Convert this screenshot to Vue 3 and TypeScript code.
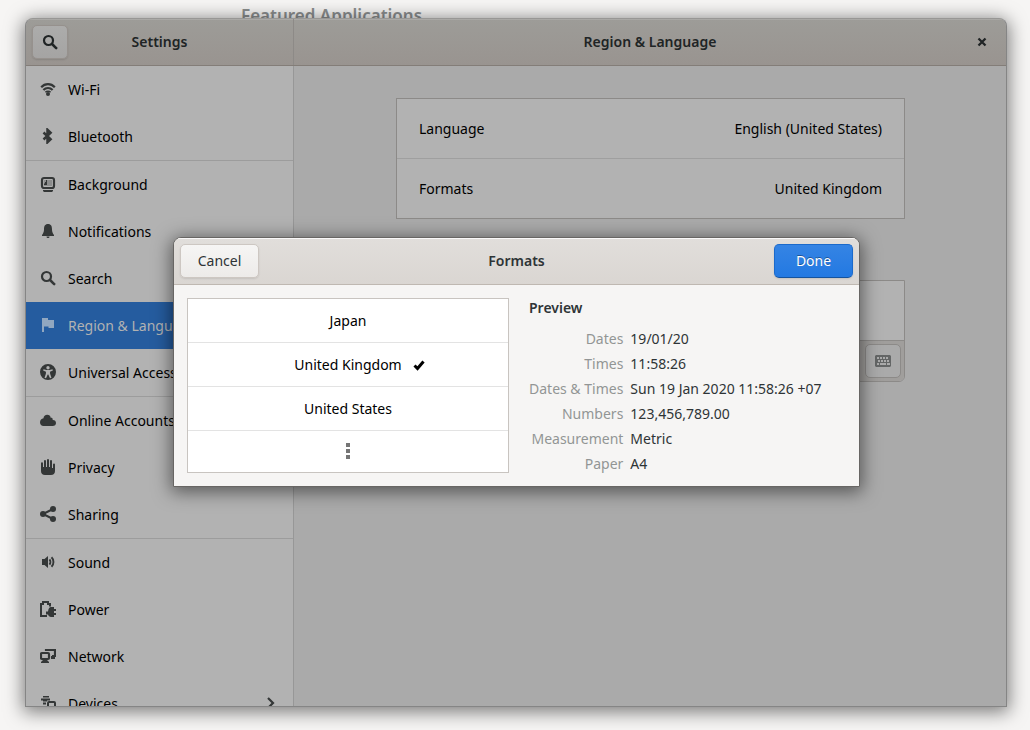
<script setup lang="ts">
import { ref } from 'vue'

interface Panel {
  id: string
  label: string
  submenu?: boolean
}

const groups: Panel[][] = [
  [
    { id: 'wifi', label: 'Wi-Fi' },
    { id: 'bluetooth', label: 'Bluetooth' },
  ],
  [
    { id: 'background', label: 'Background' },
    { id: 'notifications', label: 'Notifications' },
    { id: 'search', label: 'Search' },
    { id: 'region', label: 'Region & Language' },
    { id: 'access', label: 'Universal Access' },
  ],
  [
    { id: 'accounts', label: 'Online Accounts' },
    { id: 'privacy', label: 'Privacy' },
    { id: 'sharing', label: 'Sharing' },
  ],
  [
    { id: 'sound', label: 'Sound' },
    { id: 'power', label: 'Power' },
    { id: 'network', label: 'Network' },
    { id: 'devices', label: 'Devices', submenu: true },
  ],
]

const icons: Record<string, string> = {
  wifi: '<g fill="none" stroke="currentColor" stroke-width="2.200"><path d="M1.200 6.200C5 2.200 11 2.200 14.800 6.200"/><path d="M3.400 9c2.600-2.700 6.600-2.700 9.200 0"/></g><path d="M5.400 11.300c1.400-1.500 3.800-1.500 5.200 0" fill="none" stroke="currentColor" stroke-width="1.500"/><circle cx="8" cy="13" r="2"/>',
  bluetooth:
    '<path d="M3.500 4.500 10.600 11.200 7.500 14.200V1.800L10.600 4.800 3.500 11.500" fill="none" stroke="currentColor" stroke-width="2.500"/>',
  background:
    '<rect x="2" y="2" width="12" height="10" rx="2" fill="none" stroke="currentColor" stroke-width="2.200"/><path d="M4 4h8v6H4z" opacity=".3"/><path d="M4 9V7.500h1V6h1V4h1v5z"/><path d="M3 14h10v1l-1 1H4l-1-1z"/>',
  notifications:
    '<path d="M8 1c-3.200 0-4 2.500-4 5.200 0 2.500-.600 3.800-2 5.800v1h12v-1c-1.400-2-2-3.300-2-5.800C12 3.500 11.200 1 8 1z"/><path d="M6.500 13.500h3c0 1-.700 1.500-1.500 1.500s-1.500-.500-1.500-1.500z"/>',
  search:
    '<circle cx="6.500" cy="6.500" r="4.500" fill="none" stroke="currentColor" stroke-width="2.200"/><path d="m10 10 4.200 4.200" stroke="currentColor" stroke-width="2.500" stroke-linecap="round"/>',
  region: '<path d="M2 1h6v2h6v8H8.500V9.500H4V15H2z"/>',
  access:
    '<path fill-rule="evenodd" d="M8 0a8 8 0 1 0 0 16A8 8 0 0 0 8 0zm0 2.100a1.700 1.700 0 1 1 0 3.400 1.700 1.700 0 0 1 0-3.400zM3.500 5.300 6.500 6h3l3-.700.400 1.300-2.900 1.100.100 2 1.400 4-1.500.500L8.300 10.500h-.600L6 14.200l-1.500-.500 1.400-4 .100-2-2.900-1.100z"/>',
  accounts:
    '<path d="M7.200 2.800c-2 0-3.600 1.500-3.700 3.500C1.500 6.600 0 8.100 0 10.200 0 12.300 1.400 14 3.500 14h9.200c1.900 0 3.300-1.300 3.300-3 0-1.800-1.500-3.100-3.400-2.900.300-.700.200-1.300-.300-1.800-.400-.400-.900-.500-1.500-.400C10.500 4 9.200 2.800 7.200 2.800z"/>',
  privacy:
    '<path d="M1 4.200a.9.900 0 0 1 2 0V8h1V2a1 1 0 0 1 2 0v6h1V1a1 1 0 0 1 2 0v7h1V2a1 1 0 0 1 2 0v7h1V5.500a1 1 0 0 1 2 0V12c0 2.500-1.500 4-4 4H5c-2.500 0-4-1.500-4-4z"/>',
  sharing:
    '<path d="M13 3 3 8l10 5" fill="none" stroke="currentColor" stroke-width="2"/><circle cx="13" cy="3" r="3"/><circle cx="3" cy="8" r="3"/><circle cx="13" cy="13" r="3"/>',
  sound:
    '<path d="M2 5h2.500L8 2v12l-3.500-3H2z"/><path d="M9.500 5.300c1.200 1.400 1.200 4 0 5.400M11.500 3.200c2.600 2.400 2.600 7.200 0 9.600" fill="none" stroke="currentColor" stroke-width="1.900"/>',
  power:
    '<path d="M7 15H1V3h2V1h5v2h2v2.500" fill="none" stroke="currentColor" stroke-width="2"/><path d="M11 6h3v2h2v2h-2v2h2v2h-2v2h-3c-1.500 0-2.500-1-3-2.500H6v-3h2C8.500 7 9.500 6 11 6z"/>',
  network:
    '<rect x="1" y="5" width="8" height="6" rx="1" fill="none" stroke="currentColor" stroke-width="2.200"/><path d="M3 12h4l2 2v1H1v-1z"/><path d="M6 3V2h9v6h-3" fill="none" stroke="currentColor" stroke-width="2.200"/><path d="M11 8h4v3H11z"/>',
  devices:
    '<path d="M3 1h6v1.500H3zM1 3.500h9V5.500H7V6.500H3V5.500H1zM3 7.500h3v2H3z"/><rect x="8" y="7" width="7" height="8" rx="1" fill="none" stroke="currentColor" stroke-width="2"/><path d="M3 11h3v4H3z"/>',
}

const activePanel = ref('region')
const language = 'English (United States)'
const regions = ['Japan', 'United Kingdom', 'United States']
const selected = ref('United Kingdom')

const preview: [string, string][] = [
  ['Dates', '19/01/20'],
  ['Times', '11:58:26'],
  ['Dates & Times', 'Sun 19 Jan 2020 11:58:26 +07'],
  ['Numbers', '123,456,789.00'],
  ['Measurement', 'Metric'],
  ['Paper', 'A4'],
]
</script>

<template>
  <div class="desktop">
    <h2 class="featured">Featured Applications</h2>

    <main class="window">
      <header class="titlebar">
        <div class="bar bar-side">
          <button class="search-btn" type="button" aria-label="Search settings">
            <svg class="icon" viewBox="0 0 16 16" v-html="icons.search" />
          </button>
          <h1>Settings</h1>
        </div>
        <div class="bar bar-main">
          <h1>Region &amp; Language</h1>
          <button class="close-btn" type="button" aria-label="Close">
            <svg class="icon" viewBox="0 0 16 16">
              <path d="m4.500 4.500 7 7m0-7-7 7" stroke="currentColor" stroke-width="2.300" />
            </svg>
          </button>
        </div>
      </header>

      <div class="body">
        <nav class="sidebar">
          <div v-for="(group, g) in groups" :key="g" class="group">
            <button
              v-for="item in group"
              :key="item.id"
              type="button"
              class="nav-item"
              :class="{ active: item.id === activePanel }"
              @click="activePanel = item.id"
            >
              <svg class="icon" viewBox="0 0 16 16" v-html="icons[item.id]" />
              <span>{{ item.label }}</span>
              <svg v-if="item.submenu" class="icon chevron" viewBox="0 0 16 16">
                <path d="m5 3 5 5-5 5" fill="none" stroke="currentColor" stroke-width="2.200" />
              </svg>
            </button>
          </div>
        </nav>

        <section class="content">
          <div class="card">
            <button type="button" class="setting">
              <span>Language</span><span>{{ language }}</span>
            </button>
            <button type="button" class="setting">
              <span>Formats</span><span>{{ selected }}</span>
            </button>
          </div>
          <div class="card sources">
            <div class="source-row"></div>
            <div class="source-tools">
              <button type="button" class="key-btn" aria-label="Show keyboard layout">
                <svg class="icon" viewBox="0 0 16 16">
                  <path
                    fill-rule="evenodd"
                    d="M1 2h14l1 1v10l-1 1H1l-1-1V3zM2 4v2h2V4zm3 0v2h2V4zm3 0v2h2V4zm3 0v2h2V4zM3 7v2h2V7zm3 0v2h2V7zm3 0v2h2V7zm3 0v2h2V7zM2 10v2h2v-2zm3 0v2h6v-2zm7 0v2h3v-2z"
                  />
                </svg>
              </button>
            </div>
          </div>
        </section>
      </div>

      <div class="overlay">
        <div class="dialog" role="dialog" aria-labelledby="formats-title">
          <header class="dialog-bar">
            <button type="button" class="btn">Cancel</button>
            <h1 id="formats-title">Formats</h1>
            <button type="button" class="btn primary">Done</button>
          </header>
          <div class="dialog-body">
            <div class="regions">
              <button
                v-for="r in regions"
                :key="r"
                type="button"
                class="region"
                :aria-pressed="r === selected"
                @click="selected = r"
              >
                <span></span>
                <span>{{ r }}</span>
                <svg v-if="r === selected" class="icon" viewBox="0 0 16 16">
                  <path d="m3.500 8.500 3 3 6-7" fill="none" stroke="currentColor" stroke-width="3" />
                </svg>
              </button>
              <button type="button" class="region more" aria-label="More formats">
                <svg class="icon" viewBox="0 0 16 16">
                  <path d="M6 0h4v4H6zM6 6h4v4H6zM6 12h4v4H6z" />
                </svg>
              </button>
            </div>
            <section class="preview">
              <h2>Preview</h2>
              <dl>
                <template v-for="[name, value] in preview" :key="name">
                  <dt>{{ name }}</dt>
                  <dd>{{ value }}</dd>
                </template>
              </dl>
            </section>
          </div>
        </div>
      </div>
    </main>
  </div>
</template>

<style>
body {
  background: #f6f5f4;
}
</style>

<style scoped>
.desktop,
.desktop * {
  box-sizing: border-box;
}
.desktop {
  position: relative;
  height: 100vh;
  padding: 18px 23px 23px 25px;
  font: 14px/20px "Noto Sans", "Open Sans", sans-serif;
  color: #000;
}
h1,
h2,
dl,
dd {
  margin: 0;
}
h1,
.preview h2 {
  font-size: 14px;
  line-height: 20px;
  font-weight: 600;
}
button {
  font: inherit;
  color: inherit;
  background: none;
  border: 0;
  padding: 0;
}
.icon {
  width: 16px;
  height: 16px;
  flex: none;
  display: block;
  fill: currentColor;
}
.featured {
  position: absolute;
  top: 4px;
  left: 241px;
  font-size: 17px;
  line-height: 24px;
  font-weight: 600;
  color: #8b8e8f;
}
.window {
  position: relative;
  height: 100%;
  display: flex;
  flex-direction: column;
  overflow: hidden;
  border: 1px solid #858585;
  border-top-color: #989795;
  border-radius: 8px 8px 0 0;
  background: #aaa;
  box-shadow: 0 3px 18px 2px rgba(0, 0, 0, 0.5);
}
.titlebar {
  flex: none;
  display: flex;
  height: 47px;
  color: #202425;
  background: linear-gradient(#9d9c98, #999490);
  border-bottom: 1px solid #837d78;
  box-shadow: inset 0 1px #aaa9a6;
}
.bar {
  display: grid;
  grid-template-columns: 36px 1fr 36px;
  align-items: center;
  padding: 0 6px;
  text-align: center;
}
.bar h1 {
  grid-column: 2;
}
.bar-side {
  width: 268px;
  border-right: 1px solid #8d8a87;
}
.bar-main {
  flex: 1;
}
.search-btn {
  display: grid;
  place-items: center;
  height: 34px;
  border: 1px solid #96918d;
  border-radius: 5px;
  background: linear-gradient(#acacab, #a5a4a3);
  box-shadow: 0 1px 2px rgba(0, 0, 0, 0.12);
}
.close-btn {
  display: grid;
  place-items: center;
  height: 34px;
}
.body {
  flex: 1;
  min-height: 0;
  display: flex;
}
.sidebar {
  width: 268px;
  flex: none;
  overflow: hidden;
  background: #b2b2b2;
  border-right: 1px solid #979797;
}
.group + .group {
  border-top: 1px solid #9c9c9c;
}
.nav-item {
  display: flex;
  align-items: center;
  gap: 12px;
  width: 100%;
  height: 47px;
  padding: 0 14px;
  white-space: nowrap;
}
.nav-item .icon {
  margin-bottom: 1px;
  color: #343737;
}
.nav-item.active {
  background: #255c9f;
  color: #b2b2b2;
}
.nav-item.active .icon {
  color: #91a7c0;
}
.nav-item .chevron {
  margin-left: auto;
}
.content {
  flex: 1;
  padding: 32px 101px 0 102px;
}
.card {
  background: #b2b2b2;
  border: 1px solid #8c8a88;
}
.setting {
  display: flex;
  justify-content: space-between;
  align-items: center;
  width: 100%;
  height: 59px;
  padding: 0 22px;
}
.setting + .setting {
  height: 60px;
  border-top: 1px solid #9f9f9f;
}
.sources {
  margin-top: 61px;
  border-radius: 0 0 6px 6px;
}
.source-row {
  height: 59px;
}
.source-tools {
  display: flex;
  justify-content: flex-end;
  padding: 3px;
  border-top: 1px solid #8c8a88;
  border-radius: 0 0 5px 5px;
  background: #a09e9c;
}
.key-btn {
  display: grid;
  place-items: center;
  width: 36px;
  height: 34px;
  border: 1px solid #8c8a88;
  border-radius: 5px;
  background: #aaa;
  color: #646666;
}
.overlay {
  position: absolute;
  inset: 0;
  display: grid;
  place-items: center;
  padding: 0 0 1px 1px;
}
.dialog {
  width: 687px;
  max-width: 100%;
  overflow: hidden;
  border: 1px solid #686664;
  border-radius: 8px 8px 0 0;
  background: #f6f5f4;
  color: #2e3436;
  box-shadow: 0 3px 18px 2px rgba(0, 0, 0, 0.5);
}
.dialog-bar {
  display: grid;
  grid-template-columns: 1fr auto 1fr;
  align-items: center;
  height: 47px;
  padding: 0 6px;
  background: linear-gradient(#e1dedb, #dad6d2);
  border-bottom: 1px solid #bfb8b1;
  box-shadow: inset 0 1px #f9f8f8;
}
.btn {
  width: 79px;
  height: 34px;
  border: 1px solid #cdc7c2;
  border-radius: 5px;
  background: linear-gradient(#f6f5f4, #edebe9);
  box-shadow: 0 1px 2px rgba(0, 0, 0, 0.1);
}
.btn.primary {
  justify-self: end;
  border-color: #1b6acb;
  border-bottom-color: #15539e;
  background: linear-gradient(#3584e4, #2379e2);
  color: #fff;
  text-shadow: 0 -1px rgba(0, 0, 0, 0.35);
}
.dialog-body {
  display: flex;
  align-items: flex-start;
  gap: 20px;
  padding: 13px 13px 0;
}
.regions {
  width: 322px;
  flex: none;
  background: #fff;
  border: 1px solid #c8c4c0;
  color: #000;
}
.region {
  display: grid;
  grid-template-columns: 1fr auto 1fr;
  align-items: center;
  column-gap: 9px;
  width: 100%;
  height: 44px;
  border-bottom: 1px solid #e3e3e3;
}
.region.more {
  display: flex;
  justify-content: center;
  height: 41px;
  padding-bottom: 1px;
  border-bottom: 0;
  color: #757575;
}
.preview {
  flex: 1;
  padding-bottom: 12px;
}
.preview dl {
  display: grid;
  grid-template-columns: auto 1fr;
  column-gap: 7px;
  row-gap: 5px;
  margin-top: 11px;
  white-space: nowrap;
}
.preview dt {
  text-align: right;
  color: #929595;
}
</style>
